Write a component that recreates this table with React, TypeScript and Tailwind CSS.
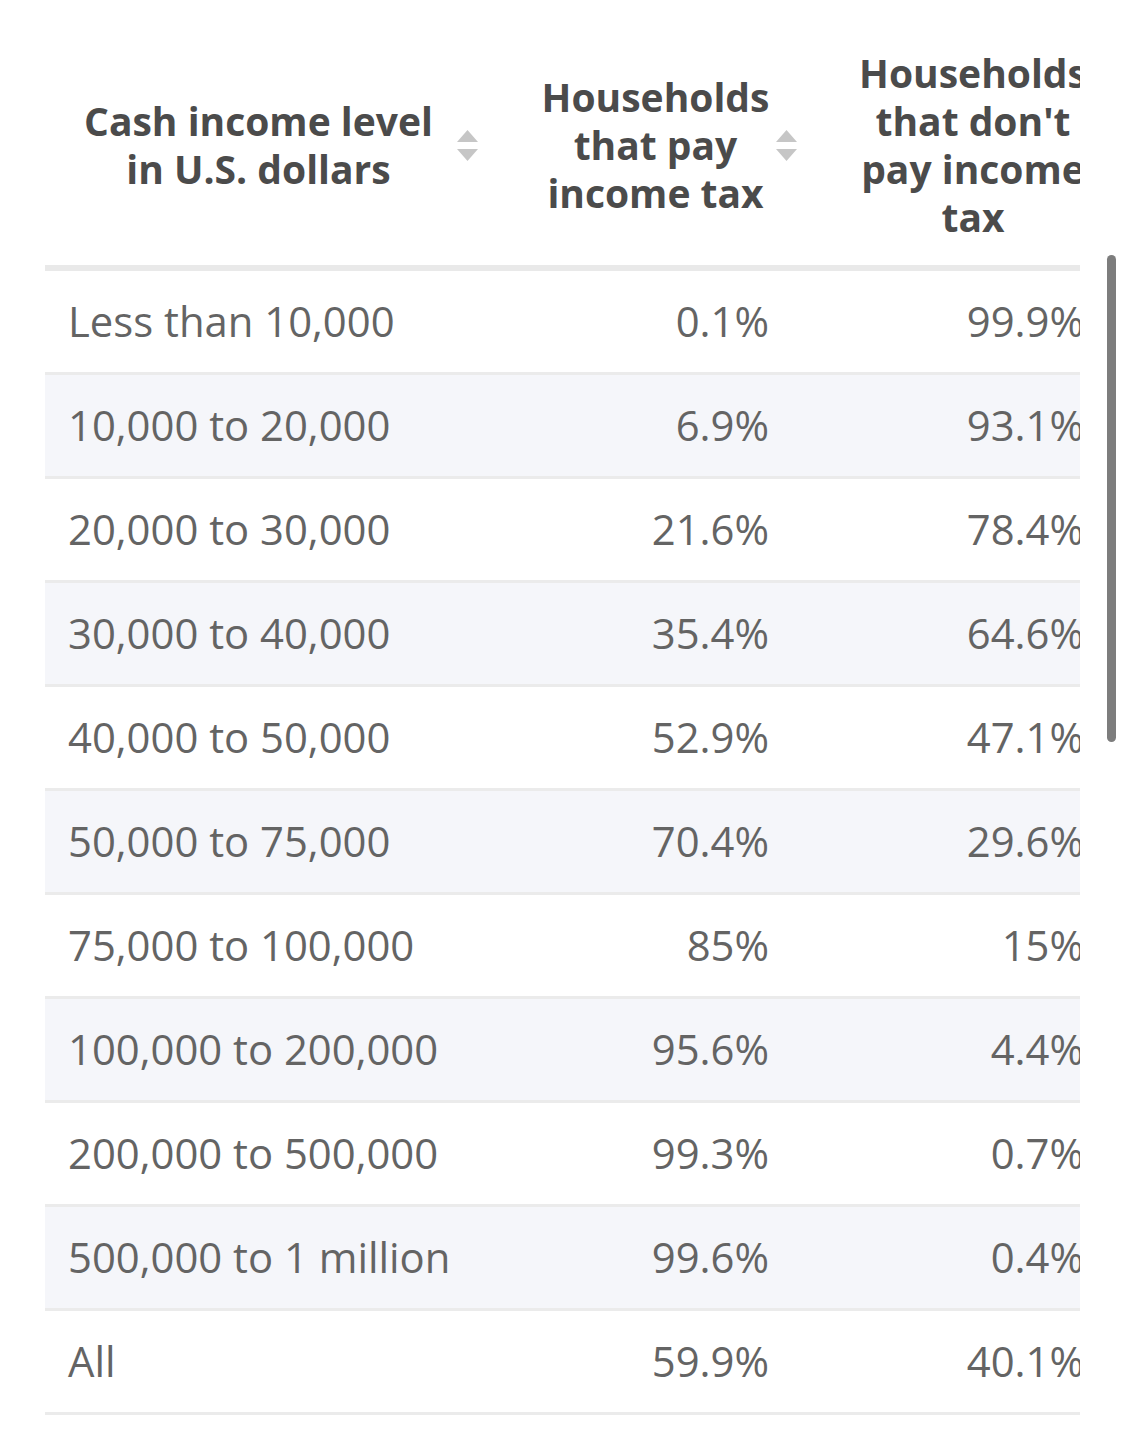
import React from "react";

const rows: [string, string, string][] = [
  ["Less than 10,000", "0.1%", "99.9%"],
  ["10,000 to 20,000", "6.9%", "93.1%"],
  ["20,000 to 30,000", "21.6%", "78.4%"],
  ["30,000 to 40,000", "35.4%", "64.6%"],
  ["40,000 to 50,000", "52.9%", "47.1%"],
  ["50,000 to 75,000", "70.4%", "29.6%"],
  ["75,000 to 100,000", "85%", "15%"],
  ["100,000 to 200,000", "95.6%", "4.4%"],
  ["200,000 to 500,000", "99.3%", "0.7%"],
  ["500,000 to 1 million", "99.6%", "0.4%"],
  ["All", "59.9%", "40.1%"],
];

function SortIcon() {
  return (
    <svg width="21" height="31" viewBox="0 0 21 31" className="shrink-0">
      <polygon points="10.5,0 21,12 0,12" fill="#c6c6c6" />
      <polygon points="0,19 21,19 10.5,31" fill="#c6c6c6" />
    </svg>
  );
}

export default function App() {
  return (
    <div
      className="relative w-[1125px] h-[1447px] bg-white overflow-hidden"
      style={{ fontFamily: '"Open Sans", "Noto Sans", sans-serif' }}
    >
      <div className="ml-[45px] w-[1035px] overflow-hidden">
        <div className="w-[1065px]">
          {/* header */}
          <div className="flex items-center pt-[49px] pb-[24px] border-b-[6px] border-[#e9e9e9] text-[39px] leading-[48px] font-bold text-[#4b4b4b]">
            <div className="w-[465px] shrink-0 flex items-center pl-[23px]">
              <div className="w-[381px] text-center">
                Cash income level
                <br />
                in U.S. dollars
              </div>
              <div className="ml-[8px]">
                <SortIcon />
              </div>
            </div>
            <div className="w-[310px] shrink-0 flex items-center">
              <div className="ml-[29px] w-[233px] text-center">
                Households
                <br />
                that pay
                <br />
                income tax
              </div>
              <div className="ml-[4px]">
                <SortIcon />
              </div>
            </div>
            <div className="w-[290px] shrink-0 flex items-center">
              <div className="ml-[37px] w-[232px] text-center whitespace-nowrap">
                Households
                <br />
                that don't
                <br />
                pay income
                <br />
                tax
              </div>
            </div>
          </div>
          {/* body */}
          {rows.map((r, i) => (
            <div
              key={i}
              className={
                "flex items-center h-[104px] border-b-[3px] border-[#ebebeb] text-[41.8px] text-[#646464] " +
                (i % 2 === 1 ? "bg-[#f5f6fa]" : "bg-white")
              }
            >
              <div className="w-[465px] shrink-0 pl-[23px] whitespace-nowrap">{r[0]}</div>
              <div className="w-[310px] shrink-0 pr-[51px] text-right whitespace-nowrap">{r[1]}</div>
              <div className="w-[290px] shrink-0 pr-[26px] text-right whitespace-nowrap">{r[2]}</div>
            </div>
          ))}
        </div>
      </div>
      {/* scroll indicator */}
      <div className="absolute left-[1107px] top-[255px] w-[9px] h-[487px] rounded-full bg-[#7d7d7d]" />
    </div>
  );
}
